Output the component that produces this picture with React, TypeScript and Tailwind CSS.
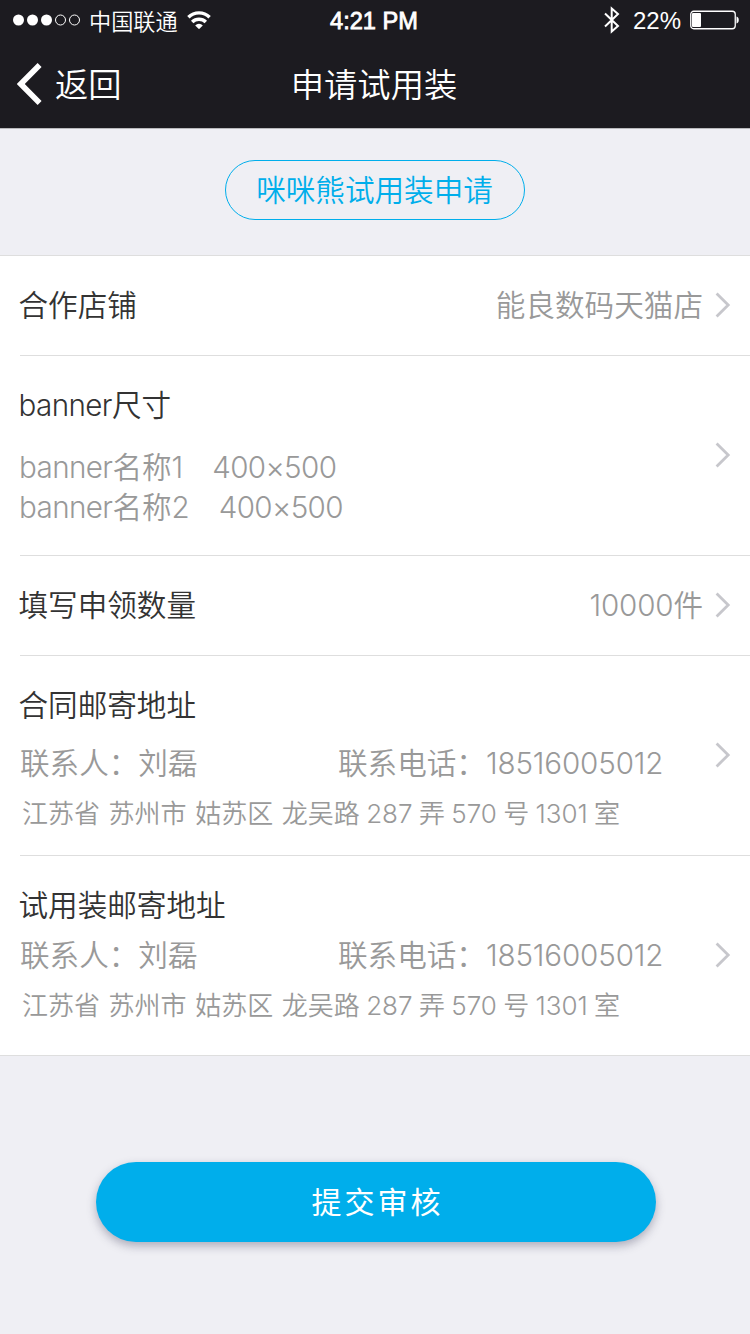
import type { ReactNode } from "react";

function StatusBar() {
  return (
    <div className="grid h-10 grid-cols-3 items-center text-[24px] leading-10">
      <div className="flex items-center pl-[13px]">
        <svg width="68" height="12" viewBox="0 0 68 12" fill="#fff">
          <circle cx="5.5" cy="6" r="5.5" />
          <circle cx="19.5" cy="6" r="5.5" />
          <circle cx="33.5" cy="6" r="5.5" />
          <circle cx="47.5" cy="6" r="5" fill="none" stroke="#fff" />
          <circle cx="61.5" cy="6" r="5" fill="none" stroke="#fff" />
        </svg>
        <span className="ml-2 h-10 whitespace-nowrap pt-[1.5px] text-[22.2px] font-[350]">中国联通</span>
        <svg className="ml-[9px]" width="24" height="18" viewBox="0 0 24 18" fill="none" stroke="#fff" strokeWidth="3.4">
          <path d="M1.4 6.3a15 15 0 0 1 21.2 0" />
          <path d="M5.2 11a9.6 9.6 0 0 1 13.6 0" />
          <path d="M12 18.2 8.2 14.4a5.4 5.4 0 0 1 7.6 0Z" fill="#fff" stroke="none" />
        </svg>
      </div>
      <div className="h-10 -translate-x-px pt-px text-center font-['Liberation_Sans'] text-[23.6px] font-normal [-webkit-text-stroke:0.8px_#fff]">
        4:21 PM
      </div>
      <div className="flex items-center justify-end pr-[10px]">
        <svg width="16" height="28" viewBox="0 0 16 28" fill="none" stroke="#fff" strokeWidth="2">
          <path d="M1 7.5 14 20 7.7 25.6V2.4L14 8 1 20.5" />
        </svg>
        <span className="ml-[13px] h-10 pt-px font-['Liberation_Sans'] text-[24px] font-normal">22%</span>
        <svg className="ml-[9px]" width="50" height="20" viewBox="0 0 50 20" fill="none">
          <rect x="0.75" y="1.25" width="44.5" height="17.5" rx="3" stroke="#fff" strokeWidth="1.3" />
          <rect x="2" y="3" width="9" height="14" rx="1" fill="#fff" />
          <path d="M46.5 6.5c3 .8 3 6.2 0 7Z" fill="#fff" />
        </svg>
      </div>
    </div>
  );
}

function NavBar() {
  return (
    <div className="grid h-[88px] grid-cols-3 items-center leading-[44px] font-[350]">
      <div className="flex items-center pl-[17px]">
        <svg width="25" height="42" viewBox="0 0 25 42" fill="none" stroke="#fff" strokeWidth="5.6">
          <path d="M22.6 2 3.8 21l18.8 19" />
        </svg>
        <span className="ml-[13px] pt-0.5 text-[33.3px]">返回</span>
      </div>
      <div className="-translate-x-px pt-0.5 text-center text-[33.3px] whitespace-nowrap">申请试用装</div>
    </div>
  );
}

function Chevron() {
  return (
    <svg className="shrink-0" width="16" height="26" viewBox="0 0 16 26" fill="none" stroke="#c7c7cc" strokeWidth="2.8">
      <path d="M1.6 1.6 13.2 13 1.6 24.4" />
    </svg>
  );
}

function Row({ children, value, tall, last }: { children: ReactNode; value?: ReactNode; tall?: boolean; last?: boolean }) {
  return (
    <div className={tall ? "h-[200px]" : "h-[100px]"}>
      <div className={`flex h-full ${last ? "" : "ml-5 border-b border-[#dedede]"}`}>
        <div className={`flex-1 pt-[29px] ${last ? "pl-5" : ""}`}>{children}</div>
        {value && <div className="mt-[29px] mr-3 h-10 text-[#999]">{value}</div>}
        <div className={`mr-[19px] ${tall ? "mt-[86px]" : "mt-9"}`}>
          <Chevron />
        </div>
      </div>
    </div>
  );
}

function Title({ children }: { children: ReactNode }) {
  return <h2 className="-ml-[1.5px] h-10 text-[#333]">{children}</h2>;
}

function Latin({ children }: { children: ReactNode }) {
  return <span className="font-light tracking-[-0.6px]">{children}</span>;
}

function Digits({ children }: { children: ReactNode }) {
  return <span className="font-light tracking-[-0.15px]">{children}</span>;
}

function Size({ name, index }: { name: string; index: number }) {
  return (
    <div className="-ml-[1px] flex h-10 whitespace-nowrap">
      <Latin>banner</Latin>
      <span>{name}</span>
      <span className="font-light">{index}</span>
      <span className="ml-[29px] font-light tracking-[-0.65px]">400×500</span>
    </div>
  );
}

function Contact() {
  return (
    <>
      <div className="flex h-10 text-[#999]">
        <span className="w-[318px] whitespace-nowrap">联系人：刘磊</span>
        <span className="whitespace-nowrap">
          联系电话：<Digits>18516005012</Digits>
        </span>
      </div>
      <div className="mt-[11px] ml-[2px] h-10 text-[26px] whitespace-nowrap text-[#999]">
        <span className="[word-spacing:1.3px]">江苏省 苏州市 姑苏区 龙吴路</span>
        <span className="[word-spacing:-1px]">
          {" "}
          <span className="font-light">287</span> 弄 <span className="font-light">570</span> 号{" "}
          <span className="font-light">1301</span> 室
        </span>
      </div>
    </>
  );
}

export default function App() {
  return (
    <div className="flex h-[1334px] w-[750px] flex-col overflow-hidden bg-[#efeff4] font-['Inter','Noto_Sans_CJK_SC',sans-serif] font-[350]">
      <header className="h-[128px] bg-[#1c1b20] text-white">
        <StatusBar />
        <NavBar />
      </header>
      <div className="flex h-[128px] justify-center border-y border-t-[#b9b9bc] border-b-[#dedede] pt-[31px]">
        <button className="h-[60px] w-[300px] rounded-full border border-[#00aeeb] pr-px text-[29.6px] leading-[58px] text-[#00aeeb]">
          咪咪熊试用装申请
        </button>
      </div>
      <main className="border-b border-[#dedede] bg-white text-[29.6px] leading-10">
        <Row value="能良数码天猫店">
          <Title>合作店铺</Title>
        </Row>
        <Row tall>
          <Title>
            <Latin>banner</Latin>尺寸
          </Title>
          <div className="mt-[22px] text-[#999]">
            <Size name="名称" index={1} />
            <Size name="名称" index={2} />
          </div>
        </Row>
        <Row
          value={
            <>
              <Digits>10000</Digits>件
            </>
          }
        >
          <Title>填写申领数量</Title>
        </Row>
        <Row tall>
          <Title>合同邮寄地址</Title>
          <div className="mt-[18px]">
            <Contact />
          </div>
        </Row>
        <div className="-mb-px">
          <Row tall last>
            <Title>试用装邮寄地址</Title>
            <div className="mt-[10px]">
              <Contact />
            </div>
          </Row>
        </div>
      </main>
      <button className="mt-[106px] ml-24 h-20 w-[560px] rounded-full bg-[#00aeeb] pl-[3px] text-[30px] leading-[80px] font-normal tracking-[3px] text-white shadow-[0_4px_10px_rgba(50,50,80,0.35)]">
        提交审核
      </button>
    </div>
  );
}
